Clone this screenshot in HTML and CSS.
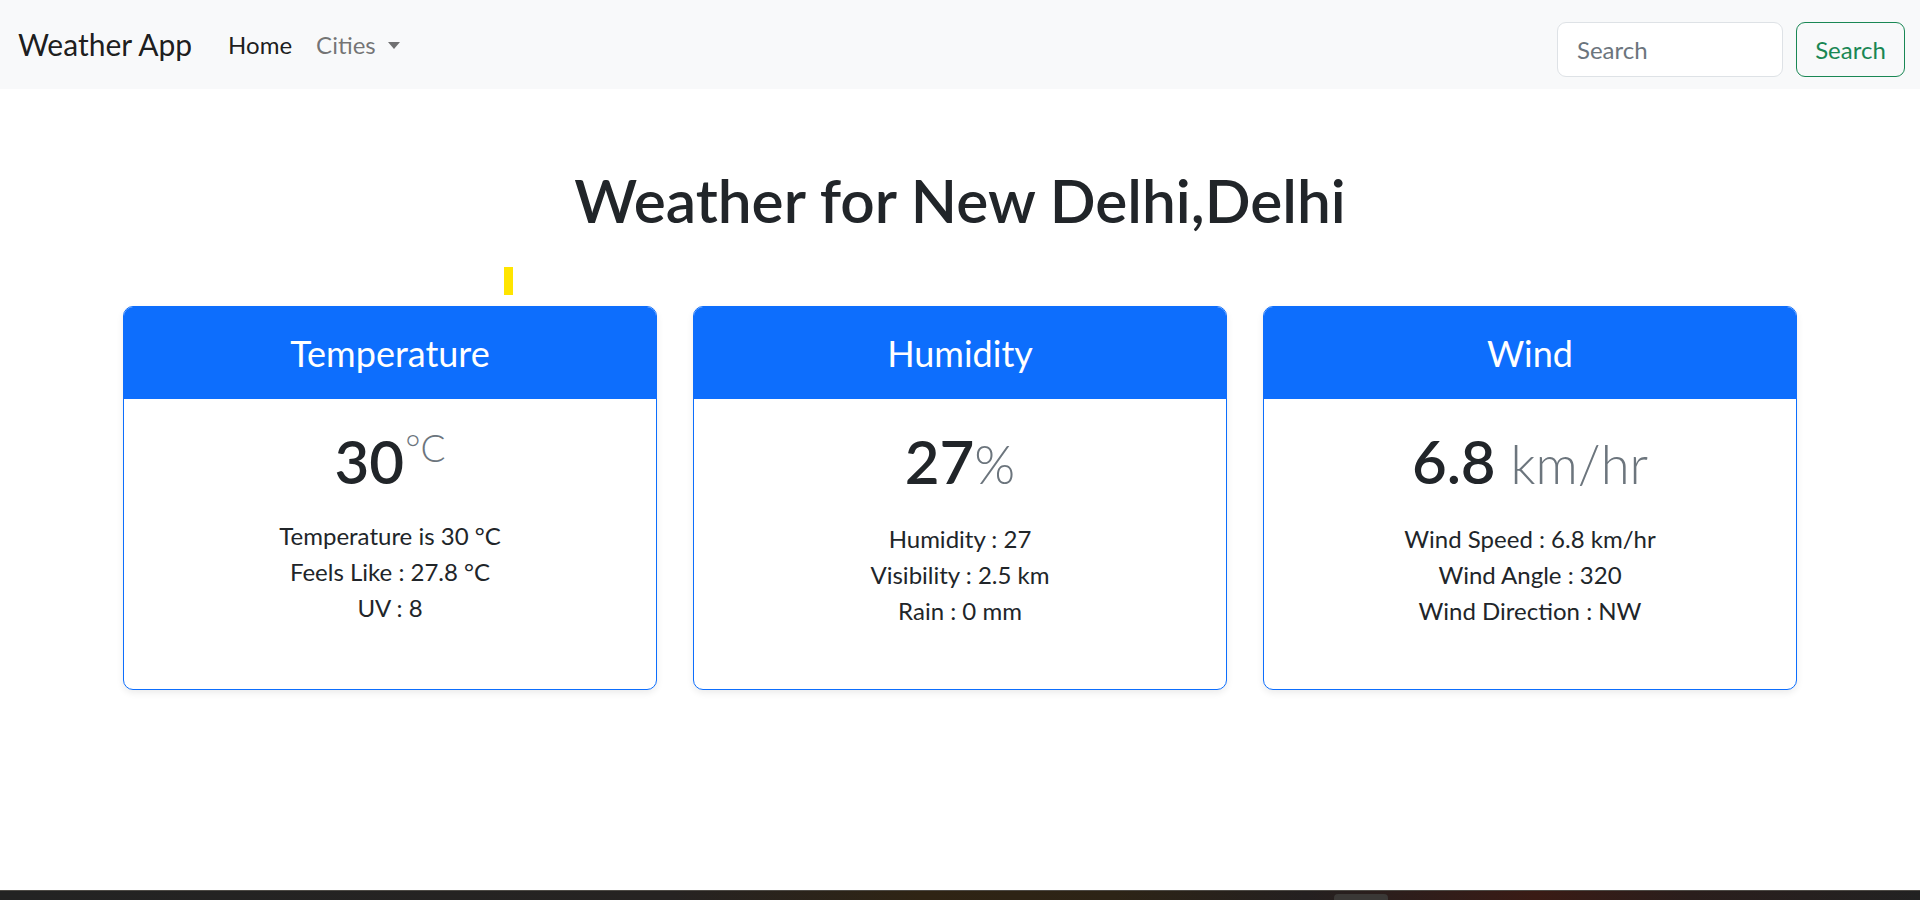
FILE: index.html
```html
<!DOCTYPE html>
<html lang="en">
<head>
<meta charset="utf-8">
<title>Weather App</title>
<link rel="stylesheet" href="styles.css">
</head>
<body>
  <nav class="navbar">
    <div class="nav-left">
      <a class="brand" href="#">Weather App</a>
      <ul class="nav-links">
        <li><a class="nav-link active" href="#">Home</a></li>
        <li><a class="nav-link dropdown" href="#">Cities<span class="caret"></span></a></li>
      </ul>
    </div>
    <form class="search-form">
      <input class="search-input" type="search" placeholder="Search">
      <button class="search-btn" type="button">Search</button>
    </form>
  </nav>

  <main class="main">
    <span class="cursor-mark"></span>
    <h1 class="page-title">Weather for New Delhi,Delhi</h1>

    <div class="cards">
      <div class="card">
        <div class="card-header">Temperature</div>
        <div class="card-body">
          <div class="value">30<sup class="unit-sup">°C</sup></div>
          <p class="detail">Temperature is 30 °C</p>
          <p class="detail">Feels Like : 27.8 °C</p>
          <p class="detail">UV : 8</p>
        </div>
      </div>

      <div class="card">
        <div class="card-header">Humidity</div>
        <div class="card-body">
          <div class="value">27<span class="unit">%</span></div>
          <p class="detail">Humidity : 27</p>
          <p class="detail">Visibility : 2.5 km</p>
          <p class="detail">Rain : 0 mm</p>
        </div>
      </div>

      <div class="card">
        <div class="card-header">Wind</div>
        <div class="card-body">
          <div class="value">6.8 <span class="unit">km/hr</span></div>
          <p class="detail">Wind Speed : 6.8 km/hr</p>
          <p class="detail">Wind Angle : 320</p>
          <p class="detail">Wind Direction : NW</p>
        </div>
      </div>
    </div>
  </main>

  <div class="taskbar"><span class="taskbar-tab"></span></div>
</body>
</html>
```
FILE: styles.css
```css
* { box-sizing: border-box; }

html, body { height: 100%; }

body {
  margin: 0;
  min-height: 100vh;
  display: flex;
  flex-direction: column;
  position: relative;
  font-family: "Lato", "Open Sans", sans-serif;
  font-size: 24px;
  line-height: 1.5;
  color: #212529;
  background: #fff;
}

/* ---------- navbar ---------- */
.navbar {
  height: 89px;
  flex: none;
  background: #f8f9fa;
  display: flex;
  justify-content: space-between;
  align-items: center;
  padding: 0 15px 0 18px;
}

.nav-left {
  display: flex;
  align-items: center;
}

.brand {
  font-size: 30px;
  line-height: 45px;
  color: rgba(0, 0, 0, 0.9);
  text-decoration: none;
  margin-right: 24px;
}

.nav-links {
  list-style: none;
  margin: 0;
  padding: 0;
  display: flex;
}

.nav-link {
  display: block;
  padding: 0 12px;
  font-size: 24px;
  line-height: 36px;
  color: rgba(0, 0, 0, 0.55);
  text-decoration: none;
}

.nav-link.active { color: rgba(0, 0, 0, 0.9); }

.caret {
  display: inline-block;
  margin-left: 12px;
  vertical-align: 5px;
  width: 0;
  height: 0;
  border-top: 7px solid rgba(0, 0, 0, 0.55);
  border-left: 6.5px solid transparent;
  border-right: 6.5px solid transparent;
}

.search-form {
  display: flex;
  gap: 13px;
  align-self: flex-start;
  margin-top: 22px;
}

.search-input {
  width: 226px;
  height: 55px;
  padding: 0 19px;
  border: 1px solid #dee2e6;
  border-radius: 9px;
  background: #fff;
  font-family: inherit;
  font-size: 24px;
  color: #212529;
  outline: none;
}

.search-input::placeholder { color: #6c757d; }

.search-btn {
  width: 109px;
  height: 55px;
  padding: 0;
  border: 1px solid #198754;
  border-radius: 9px;
  background: transparent;
  font-family: inherit;
  font-size: 24px;
  color: #198754;
}

/* ---------- main ---------- */
.main {
  flex: 1;
}

.cursor-mark {
  position: absolute;
  left: 504px;
  top: 267px;
  width: 9px;
  height: 28px;
  background: #ffe500;
}

.page-title {
  margin: 75px 0 70px;
  text-align: center;
  font-size: 60.4px;
  line-height: 72px;
  font-weight: 600;
  color: #212529;
}

.cards {
  width: 1674px;
  margin: 0 auto;
  display: grid;
  grid-template-columns: repeat(3, 1fr);
  column-gap: 36px;
}

.card {
  border: 1px solid #0d6efd;
  border-radius: 10px;
  overflow: hidden;
  background: #fff;
  box-shadow: 0 3px 7px rgba(0, 0, 0, 0.08);
}

.card-header {
  height: 92px;
  background: #0d6efd;
  color: #fff;
  font-size: 36px;
  display: flex;
  align-items: center;
  justify-content: center;
}

.card-body {
  padding: 26px 24px 60px;
  text-align: center;
}

.value {
  font-size: 60px;
  line-height: 72px;
  font-weight: 600;
  margin-bottom: 21px;
  color: #212529;
}

.unit {
  font-size: 0.875em;
  font-weight: 300;
  color: #6c757d;
}

.unit-sup {
  font-size: 37px;
  font-weight: 300;
  color: #6c757d;
  position: relative;
  top: -22px;
  vertical-align: baseline;
  line-height: 0;
  margin-left: 1px;
}

.detail {
  margin: 0;
  line-height: 36px;
}

/* ---------- taskbar strip ---------- */
.taskbar {
  flex: none;
  height: 10px;
  position: relative;
  border-top: 1px solid #4d4a45;
  background: linear-gradient(90deg, #232323 0%, #262322 35%, #2f2414 48%, #2d2416 58%, #242020 68%, #3a1b15 80%, #2a1e1c 88%, #222 100%);
}

.taskbar-tab {
  position: absolute;
  left: 1334px;
  top: 3px;
  width: 54px;
  height: 8px;
  border-radius: 4px 4px 0 0;
  background: #3a3836;
}
```
